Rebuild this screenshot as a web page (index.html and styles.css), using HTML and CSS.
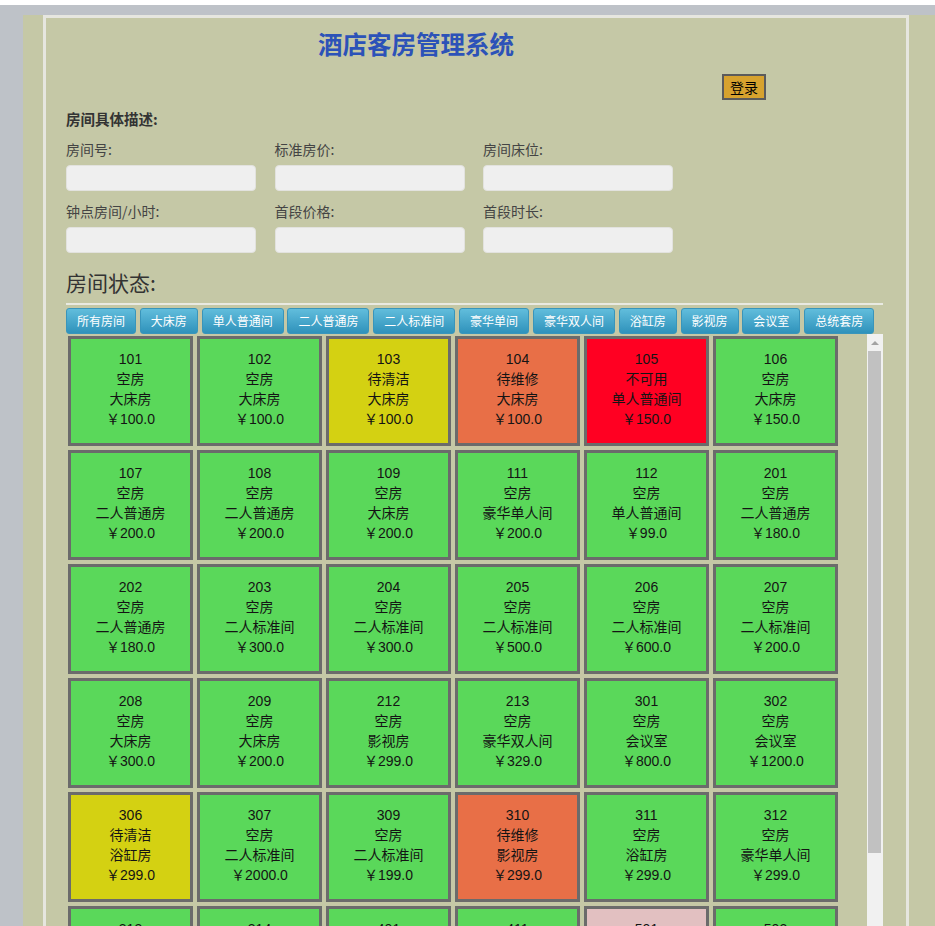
FILE: index.html
```html
<!DOCTYPE html>
<html lang="zh">
<head>
<meta charset="utf-8">
<title>酒店客房管理系统</title>
<link rel="stylesheet" href="styles.css">
</head>
<body>
<div class="page">
  <div class="main">
    <div class="panel">
      <h1 class="title">酒店客房管理系统</h1>
      <div class="login-row"><button class="login">登录</button></div>
      <div class="section-head">房间具体描述:</div>
      <div class="form">
        <div class="field"><label>房间号:</label><input class="inp" type="text"></div>
        <div class="field"><label>标准房价:</label><input class="inp" type="text"></div>
        <div class="field"><label>房间床位:</label><input class="inp" type="text"></div>
        <div class="field"><label>钟点房间/小时:</label><input class="inp" type="text"></div>
        <div class="field"><label>首段价格:</label><input class="inp" type="text"></div>
        <div class="field"><label>首段时长:</label><input class="inp" type="text"></div>
      </div>
      <div class="status-title">房间状态:</div>
      <div class="tabs">
        <button class="tab">所有房间</button>
        <button class="tab">大床房</button>
        <button class="tab">单人普通间</button>
        <button class="tab">二人普通房</button>
        <button class="tab">二人标准间</button>
        <button class="tab">豪华单间</button>
        <button class="tab">豪华双人间</button>
        <button class="tab">浴缸房</button>
        <button class="tab">影视房</button>
        <button class="tab">会议室</button>
        <button class="tab">总统套房</button>
      </div>
      <div class="rooms-wrap">
        <div class="rooms">
          <div class="room free"><div>101</div><div>空房</div><div>大床房</div><div>￥100.0</div></div>
          <div class="room free"><div>102</div><div>空房</div><div>大床房</div><div>￥100.0</div></div>
          <div class="room clean"><div>103</div><div>待清洁</div><div>大床房</div><div>￥100.0</div></div>
          <div class="room repair"><div>104</div><div>待维修</div><div>大床房</div><div>￥100.0</div></div>
          <div class="room off"><div>105</div><div>不可用</div><div>单人普通间</div><div>￥150.0</div></div>
          <div class="room free"><div>106</div><div>空房</div><div>大床房</div><div>￥150.0</div></div>

          <div class="room free"><div>107</div><div>空房</div><div>二人普通房</div><div>￥200.0</div></div>
          <div class="room free"><div>108</div><div>空房</div><div>二人普通房</div><div>￥200.0</div></div>
          <div class="room free"><div>109</div><div>空房</div><div>大床房</div><div>￥200.0</div></div>
          <div class="room free"><div>111</div><div>空房</div><div>豪华单人间</div><div>￥200.0</div></div>
          <div class="room free"><div>112</div><div>空房</div><div>单人普通间</div><div>￥99.0</div></div>
          <div class="room free"><div>201</div><div>空房</div><div>二人普通房</div><div>￥180.0</div></div>

          <div class="room free"><div>202</div><div>空房</div><div>二人普通房</div><div>￥180.0</div></div>
          <div class="room free"><div>203</div><div>空房</div><div>二人标准间</div><div>￥300.0</div></div>
          <div class="room free"><div>204</div><div>空房</div><div>二人标准间</div><div>￥300.0</div></div>
          <div class="room free"><div>205</div><div>空房</div><div>二人标准间</div><div>￥500.0</div></div>
          <div class="room free"><div>206</div><div>空房</div><div>二人标准间</div><div>￥600.0</div></div>
          <div class="room free"><div>207</div><div>空房</div><div>二人标准间</div><div>￥200.0</div></div>

          <div class="room free"><div>208</div><div>空房</div><div>大床房</div><div>￥300.0</div></div>
          <div class="room free"><div>209</div><div>空房</div><div>大床房</div><div>￥200.0</div></div>
          <div class="room free"><div>212</div><div>空房</div><div>影视房</div><div>￥299.0</div></div>
          <div class="room free"><div>213</div><div>空房</div><div>豪华双人间</div><div>￥329.0</div></div>
          <div class="room free"><div>301</div><div>空房</div><div>会议室</div><div>￥800.0</div></div>
          <div class="room free"><div>302</div><div>空房</div><div>会议室</div><div>￥1200.0</div></div>

          <div class="room clean"><div>306</div><div>待清洁</div><div>浴缸房</div><div>￥299.0</div></div>
          <div class="room free"><div>307</div><div>空房</div><div>二人标准间</div><div>￥2000.0</div></div>
          <div class="room free"><div>309</div><div>空房</div><div>二人标准间</div><div>￥199.0</div></div>
          <div class="room repair"><div>310</div><div>待维修</div><div>影视房</div><div>￥299.0</div></div>
          <div class="room free"><div>311</div><div>空房</div><div>浴缸房</div><div>￥299.0</div></div>
          <div class="room free"><div>312</div><div>空房</div><div>豪华单人间</div><div>￥299.0</div></div>

          <div class="room free"><div>313</div><div>空房</div><div>浴缸房</div><div>￥299.0</div></div>
          <div class="room free"><div>314</div><div>空房</div><div>影视房</div><div>￥299.0</div></div>
          <div class="room free"><div>401</div><div>空房</div><div>大床房</div><div>￥200.0</div></div>
          <div class="room free"><div>411</div><div>空房</div><div>大床房</div><div>￥200.0</div></div>
          <div class="room booked"><div>501</div><div>已预订</div><div>总统套房</div><div>￥3000.0</div></div>
          <div class="room free"><div>502</div><div>空房</div><div>总统套房</div><div>￥3000.0</div></div>
        </div>
        <div class="scrollbar">
          <div class="sb-arrow"><span class="tri"></span></div>
          <div class="sb-thumb"></div>
        </div>
      </div>
    </div>
  </div>
</div>
</body>
</html>
```

FILE: styles.css
```css
html, body {
  margin: 0;
  padding: 0;
  overflow: hidden;
  height: 926px;
}
body {
  background: #ffffff;
  padding-top: 5px;
  font-family: "Liberation Sans", "Noto Sans CJK SC", sans-serif;
  color: #222;
}
.page {
  background: #bec2c8;
  padding: 10px 0 0 23px;
  height: 1000px;
}
.main {
  background: #c5c8a6;
  padding: 0 26px 0 20px;
  height: 1000px;
}
.panel {
  width: 817px;
  border: 3px solid #e6e6df;
  border-bottom: none;
  padding: 0 23px 0 20px;
  height: 1000px;
}
.title {
  margin: 12px 0 0 0;
  width: 700px;
  text-align: center;
  font-family: "Noto Sans CJK SC", sans-serif;
  font-size: 24.5px;
  line-height: 28px;
  font-weight: bold;
  color: #2c52b8;
}
.login-row {
  margin-top: 16px;
  padding-left: 656px;
  height: 26px;
}
.login {
  display: block;
  width: 44px;
  height: 26px;
  margin: 0;
  padding: 0;
  background: #d7a22e;
  border: 2px solid #5b5b5b;
  font-family: "Noto Sans CJK SC", sans-serif;
  font-size: 14px;
  line-height: 20px;
  color: #000;
}
.section-head {
  margin-top: 9px;
  font-family: "Noto Sans CJK SC", sans-serif;
  font-size: 14.5px;
  font-weight: bold;
  line-height: 20px;
  color: #333;
}
.form {
  margin-top: 10px;
  display: grid;
  grid-template-columns: 190px 190px 190px;
  column-gap: 18.5px;
  row-gap: 10px;
}
.field label {
  display: block;
  font-family: "Noto Sans CJK SC", sans-serif;
  font-size: 14px;
  line-height: 20px;
  color: #444;
}
.inp {
  display: block;
  box-sizing: border-box;
  margin-top: 6px;
  width: 190px;
  height: 26px;
  background: #efefef;
  border: 1px solid #e2e2de;
  border-radius: 4px;
  padding: 0 6px;
}
.status-title {
  margin-top: 17px;
  font-family: "Noto Sans CJK SC", sans-serif;
  font-size: 21px;
  line-height: 24px;
  color: #333;
  padding-bottom: 9px;
  border-bottom: 2px solid #e9eae2;
}
.tabs {
  margin-top: 3px;
  display: flex;
  gap: 3.8px;
}
.tab {
  box-sizing: border-box;
  height: 26px;
  margin: 0;
  padding: 0 10px;
  border: 1px solid #3995bb;
  border-radius: 3px;
  background: linear-gradient(#61bddc, #2f92bb);
  color: #fff;
  font-family: "Noto Sans CJK SC", sans-serif;
  font-size: 12px;
  line-height: 22px;
}
.rooms-wrap {
  display: flex;
  height: 620px;
}
.rooms {
  flex: 1;
  overflow: hidden;
  display: grid;
  grid-template-columns: repeat(6, 125px);
  grid-auto-rows: 110px;
  gap: 4px;
  padding: 2px;
  align-content: start;
}
.room {
  box-sizing: border-box;
  border: 3px solid #6b6b6b;
  padding-top: 10px;
  text-align: center;
  font-size: 14px;
  line-height: 20px;
  color: #141414;
}
.free { background: #5ad85a; }
.clean { background: #d4d112; }
.repair { background: #e86f47; }
.off { background: #ff0022; }
.booked { background: #e2c0c1; }
.scrollbar {
  width: 16px;
  background: #f1f1f1;
  display: flex;
  flex-direction: column;
}
.sb-arrow {
  height: 17px;
  display: flex;
  align-items: center;
  justify-content: center;
}
.tri {
  width: 0;
  height: 0;
  border-left: 4px solid transparent;
  border-right: 4px solid transparent;
  border-bottom: 4px solid #a3a3a3;
}
.sb-thumb {
  height: 502px;
  margin: 0 2px 0 1px;
  background: #c1c1c1;
}
```
